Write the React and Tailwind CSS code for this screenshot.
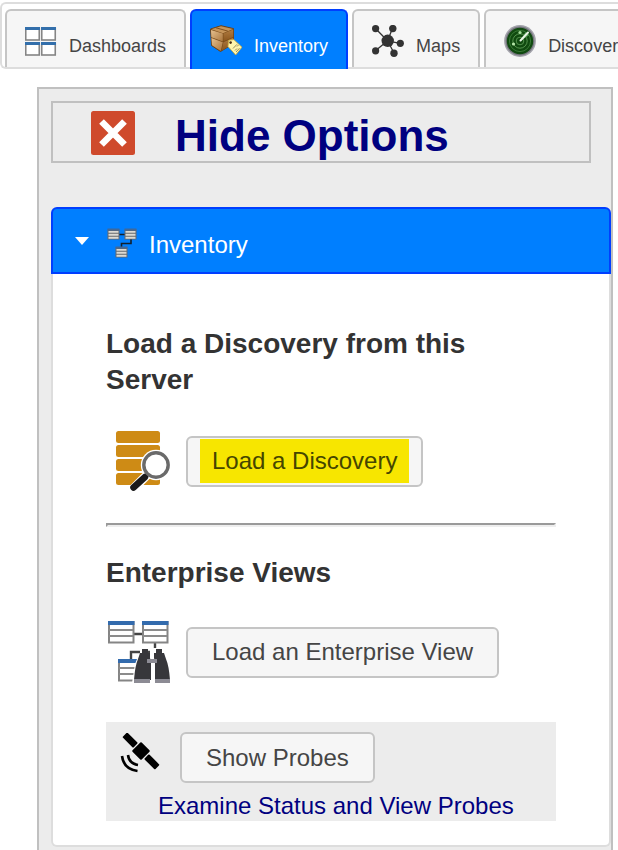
const tabs = [
  { label: "Dashboards", Icon: DashboardsIcon },
  { label: "Inventory", Icon: BoxIcon, selected: true },
  { label: "Maps", Icon: MapsIcon },
  { label: "Discover", Icon: RadarIcon },
];

function Pane({ x, y }) {
  return (
    <g>
      <rect x={x + 0.75} y={y + 1} width="13.5" height="12" fill="#fff" stroke="#858585" strokeWidth="1.6" />
      <rect x={x} y={y} width="15" height="3" fill="#336fab" />
    </g>
  );
}

function DashboardsIcon() {
  return (
    <svg className="size-8 shrink-0" viewBox="0 0 32 32" aria-hidden="true">
      <Pane x={0} y={2} />
      <Pane x={16} y={2} />
      <Pane x={0} y={17} />
      <Pane x={16} y={17} />
    </svg>
  );
}

function BoxIcon() {
  return (
    <svg className="size-8 shrink-0" viewBox="0 0 32 32" aria-hidden="true">
      <defs>
        <linearGradient id="box-left" x1="0" y1="0" x2="1" y2="1">
          <stop offset="0" stopColor="#e6c190" />
          <stop offset="1" stopColor="#a9743a" />
        </linearGradient>
        <linearGradient id="box-right" x1="0" y1="0" x2="0" y2="1">
          <stop offset="0" stopColor="#b07b40" />
          <stop offset="1" stopColor="#8a551d" />
        </linearGradient>
      </defs>
      <path d="M0.5 4 L11 0.7 L23.5 3.6 V18.5 L10.5 26.5 L1.5 20.5 Z" fill="#754817" stroke="#6b4218" strokeLinejoin="round" />
      <path d="M1.2 4.2 L11 1.2 L23 4 L13 8.2 Z" fill="#c59459" />
      <path d="M1 4.9 L12.8 8.6 V16.6 L1.3 12.3 Z" fill="url(#box-left)" />
      <path d="M1.4 13 L12.8 17.3 L10.8 26 L2 20.2 Z" fill="url(#box-left)" />
      <path d="M13.4 8.6 L23.2 4.6 V12 L13.4 16.6 Z" fill="url(#box-right)" />
      <path d="M13.4 17.3 L23.2 12.8 V18.4 L11.4 26 Z" fill="url(#box-right)" />
      <path d="M6 2.8 L17.8 6.1" stroke="#80501f" strokeWidth="1" />
      <path d="M18.6 15.3 L23.8 14.6 L32 22.2 L25.7 30 L18 21.5 Z" fill="#fff6ad" stroke="#c7a53a" strokeWidth="0.8" strokeLinejoin="round" />
      <path d="M23 23.5 l4 -4.2 M25 25.5 l2 -2 M27 21.5 l1.5 -1.5 M26 27 l3.5 -3.8" stroke="#8a7f55" strokeWidth="0.9" />
      <circle cx="20.6" cy="17.6" r="1.3" fill="#4f2c10" />
    </svg>
  );
}

function MapsIcon() {
  return (
    <svg className="size-8 shrink-0" viewBox="0 0 32 32" fill="#333" aria-hidden="true">
      <path d="M15.5 15.8 L3.5 3.5 M15.5 15.8 L20.5 3.5 M15.5 15.8 L28 18.3 M15.5 15.8 L22 28 M15.5 15.8 L3.5 25.7" stroke="#333" strokeWidth="1.3" />
      <circle cx="15.7" cy="15.8" r="6.2" />
      <circle cx="3.6" cy="3.6" r="3.6" />
      <circle cx="20.8" cy="3.6" r="3.7" />
      <circle cx="28.3" cy="18.3" r="3.6" />
      <circle cx="22" cy="28.2" r="3.7" />
      <circle cx="3.6" cy="25.8" r="3.6" />
    </svg>
  );
}

function RadarIcon() {
  return (
    <svg className="size-8 shrink-0" viewBox="0 0 32 32" fill="none" aria-hidden="true">
      <circle cx="16" cy="16" r="15.9" fill="#a3a3ab" />
      <circle cx="16" cy="16" r="14.4" fill="#77777f" />
      <circle cx="16" cy="16" r="13.2" fill="#104a10" />
      <circle cx="16" cy="16" r="10.6" stroke="#4a8f45" strokeWidth="0.7" />
      <circle cx="16" cy="16" r="7.2" stroke="#64a55c" strokeWidth="0.8" />
      <circle cx="16" cy="16" r="3.8" stroke="#64a55c" strokeWidth="0.8" />
      <path d="M16 16 L21.5 7 L25.3 10.3 Z" fill="#4f9450" />
      <path d="M16.5 15.5 L24 7.5" stroke="#e9f5e6" strokeWidth="2" strokeLinecap="round" />
      <circle cx="16" cy="7.5" r="1.6" fill="#a5dc9b" />
      <circle cx="9.5" cy="19" r="1.6" fill="#b5e5a9" />
    </svg>
  );
}

function CloseIcon() {
  return (
    <svg className="mt-2 size-11 shrink-0" viewBox="0 0 44 44" aria-hidden="true">
      <rect width="44" height="44" rx="2.5" fill="#cf4a2c" />
      <path d="M10.5 10.5 L33.5 33.5 M33.5 10.5 L10.5 33.5" stroke="#fff" strokeWidth="6.6" />
    </svg>
  );
}

function MiniTable({ x, y }) {
  return (
    <g>
      <rect x={x} y={y} width="12" height="10" fill="#66696c" />
      <path d={`M${x + 1} ${y + 2.4} h10 M${x + 1} ${y + 5.3} h10 M${x + 1} ${y + 8.2} h10`} stroke="#dcdad3" strokeWidth="1.9" />
      <rect x={x} y={y - 1} width="12" height="2" fill="#40699a" />
    </g>
  );
}

function SchemaIcon() {
  return (
    <svg className="size-[30px] shrink-0" viewBox="0 0 30 30" aria-hidden="true">
      <path d="M12 6.5 H18 M24 10 V15.5 H14.5 V20" fill="none" stroke="#12202e" strokeWidth="1.6" />
      <MiniTable x={0.5} y={1.5} />
      <MiniTable x={17.5} y={1.5} />
      <MiniTable x={8.5} y={19.5} />
    </svg>
  );
}

function DatabaseSearchIcon() {
  return (
    <svg className="size-16 shrink-0" viewBox="0 0 64 64" fill="none" aria-hidden="true">
      <g fill="#ce8b15">
        <rect x="10" y="2" width="44" height="12" rx="2.5" />
        <rect x="10" y="16" width="44" height="12" rx="2.5" />
        <rect x="10" y="30" width="44" height="12" rx="2.5" />
        <rect x="10" y="44" width="44" height="12" rx="2.5" />
      </g>
      <circle cx="50" cy="36" r="15.2" fill="#fff" />
      <path d="M41 46 L27 60" stroke="#fff" strokeWidth="9" />
      <path d="M42.5 44.5 L38 49" stroke="#68686c" strokeWidth="4" />
      <path d="M39 48 L27.5 58.5" stroke="#19191b" strokeWidth="6.5" strokeLinecap="round" />
      <circle cx="50" cy="36" r="12.2" fill="#fff" stroke="#6a6a6a" strokeWidth="3.4" />
    </svg>
  );
}

function TableShape({ x, y }) {
  return (
    <g>
      <rect x={x + 1} y={y + 1} width="24.5" height="20.5" fill="#fff" stroke="#858585" strokeWidth="2" />
      <path d={`M${x + 1} ${y + 9} h24 M${x + 1} ${y + 15} h24`} stroke="#8b8b8b" strokeWidth="2" />
      <rect x={x} y={y} width="26.5" height="4" fill="#336bad" />
    </g>
  );
}

function EnterpriseIcon() {
  return (
    <svg className="size-16 shrink-0" viewBox="0 0 64 64" aria-hidden="true">
      <path d="M28 14 H37 M49 22 V28 M25 40 V32 H34 M41 32 H44" fill="none" stroke="#444" strokeWidth="2.4" />
      <TableShape x={2} y={1} />
      <TableShape x={36} y={1} />
      <TableShape x={12} y={39} />
      <path d="M33 34 H58 L64 58 V63 H26 L29 44 Z" fill="#fff" />
      <g fill="#37373b">
        <path d="M36 29 h6 v4 h2 v5 l1 4 v18 H28 q1 -14 4 -21 l2 -6 h2 Z" />
        <path d="M50 29 h6 v4 h2 l2 6 q3 7 4 21 H49 V42 l-1 -4 v-5 h2 Z" />
      </g>
      <path d="M28 59 H44 V63 H28 Z M49 59 H64 V63 H49 Z" fill="#8c8b94" />
      <path d="M41 39 h10 v4 h-10 Z" fill="#8c8b94" />
    </svg>
  );
}

function SatelliteIcon() {
  return (
    <svg className="mt-px size-10 shrink-0" viewBox="0 0 40 40" aria-hidden="true">
      <g transform="rotate(45 21 18)">
        <rect x="14.5" y="11.5" width="13" height="13" rx="1" />
        <rect x="-2" y="14.6" width="15.2" height="6.8" rx="1" />
        <rect x="28.8" y="14.6" width="15.2" height="6.8" rx="1" />
      </g>
      <path d="M2 23 Q3.5 36 17.5 38 M8 22 Q9 30.5 18 32" fill="none" stroke="#000" strokeWidth="2.6" />
    </svg>
  );
}

function ActionButton({ children }) {
  return (
    <button
      type="button"
      className="flex h-[51px] items-center whitespace-nowrap rounded-md border-2 border-[#c5c5c5] bg-[#f6f6f6] px-6 text-2xl text-[#454545]"
    >
      {children}
    </button>
  );
}

function Tab({ label, Icon, selected }) {
  const state = selected
    ? "-mb-[2px] h-[60px] border-[#003eff] bg-[#007fff] pb-[2px] text-white"
    : "h-[58px] border-[#c5c5c5] bg-[#f6f6f6] text-[#454545]";
  return (
    <button
      type="button"
      role="tab"
      aria-selected={Boolean(selected)}
      className={`flex shrink-0 items-center gap-3 rounded-t-md border-2 border-b-0 px-[18px] text-lg ${state}`}
    >
      <span className="pt-1">
        <Icon />
      </span>
      <span className="pt-[14px]">{label}</span>
    </button>
  );
}

export default function App() {
  return (
    <div className="flex min-h-screen flex-col overflow-x-clip bg-white pt-[2px] font-['Liberation_Sans',Arial,sans-serif]">
      <nav
        role="tablist"
        className="flex gap-1 rounded-l-md border-2 border-r-0 border-[#dddddd] pt-[5px] pl-[3px]"
      >
        {tabs.map((tab) => (
          <Tab key={tab.label} {...tab} />
        ))}
      </nav>

      <main className="mt-[18px] mr-[5px] ml-[37px] flex-1 border-2 border-b-0 border-[#c0c0c0] bg-[#ececec] pt-3 pb-[3px] pl-3">
        <div className="mr-5 border-2 border-[#c0c0c0]">
          <button type="button" className="flex w-full items-start gap-10 pl-[38px] text-left">
            <CloseIcon />
            <span className="pt-2 text-[44px] leading-[50px] font-bold text-[#000080]">Hide Options</span>
          </button>
        </div>

        <section className="mt-11">
          <button
            type="button"
            aria-expanded="true"
            className="flex h-[67px] w-full items-center rounded-t-md border-2 border-[#003eff] bg-[#007fff] pl-[22px] text-left text-white"
          >
            <svg className="h-2 w-[14px]" viewBox="0 0 14 8" fill="#fff" aria-hidden="true">
              <path d="M0 0 H14 L7 8 Z" />
            </svg>
            <span className="ml-[18px] pt-1">
              <SchemaIcon />
            </span>
            <span className="ml-3 pt-2 text-2xl">Inventory</span>
          </button>

          <div className="rounded-b-md border-2 border-t-0 border-[#dddddd] bg-white px-[53px] pt-[52px] pb-6 text-[#333333]">
            <h2 className="text-[28px] leading-9 font-bold">Load a Discovery from this Server</h2>
            <div className="mt-[31px] flex items-center gap-4">
              <DatabaseSearchIcon />
              <ActionButton>
                <span className="-mx-3 bg-[#f7e600] px-3 leading-[44px] text-[#454500]">Load a Discovery</span>
              </ActionButton>
            </div>

            <hr className="mt-[30px] border-2 border-t-[#9a9a9a] border-r-[#eeeeee] border-b-[#eeeeee] border-l-[#9a9a9a]" />

            <h2 className="mt-7 text-[28px] leading-9 font-bold">Enterprise Views</h2>
            <div className="mt-[29px] flex items-center gap-4">
              <EnterpriseIcon />
              <ActionButton>Load an Enterprise View</ActionButton>
            </div>

            <div className="mt-[38px] bg-[#ececec] pt-[10px] pl-[14px]">
              <div className="flex items-start gap-5">
                <SatelliteIcon />
                <ActionButton>Show Probes</ActionButton>
              </div>
              <p className="mt-2 pl-[38px] text-2xl leading-[30px] text-[#000080]">Examine Status and View Probes</p>
            </div>
          </div>
        </section>
      </main>
    </div>
  );
}
